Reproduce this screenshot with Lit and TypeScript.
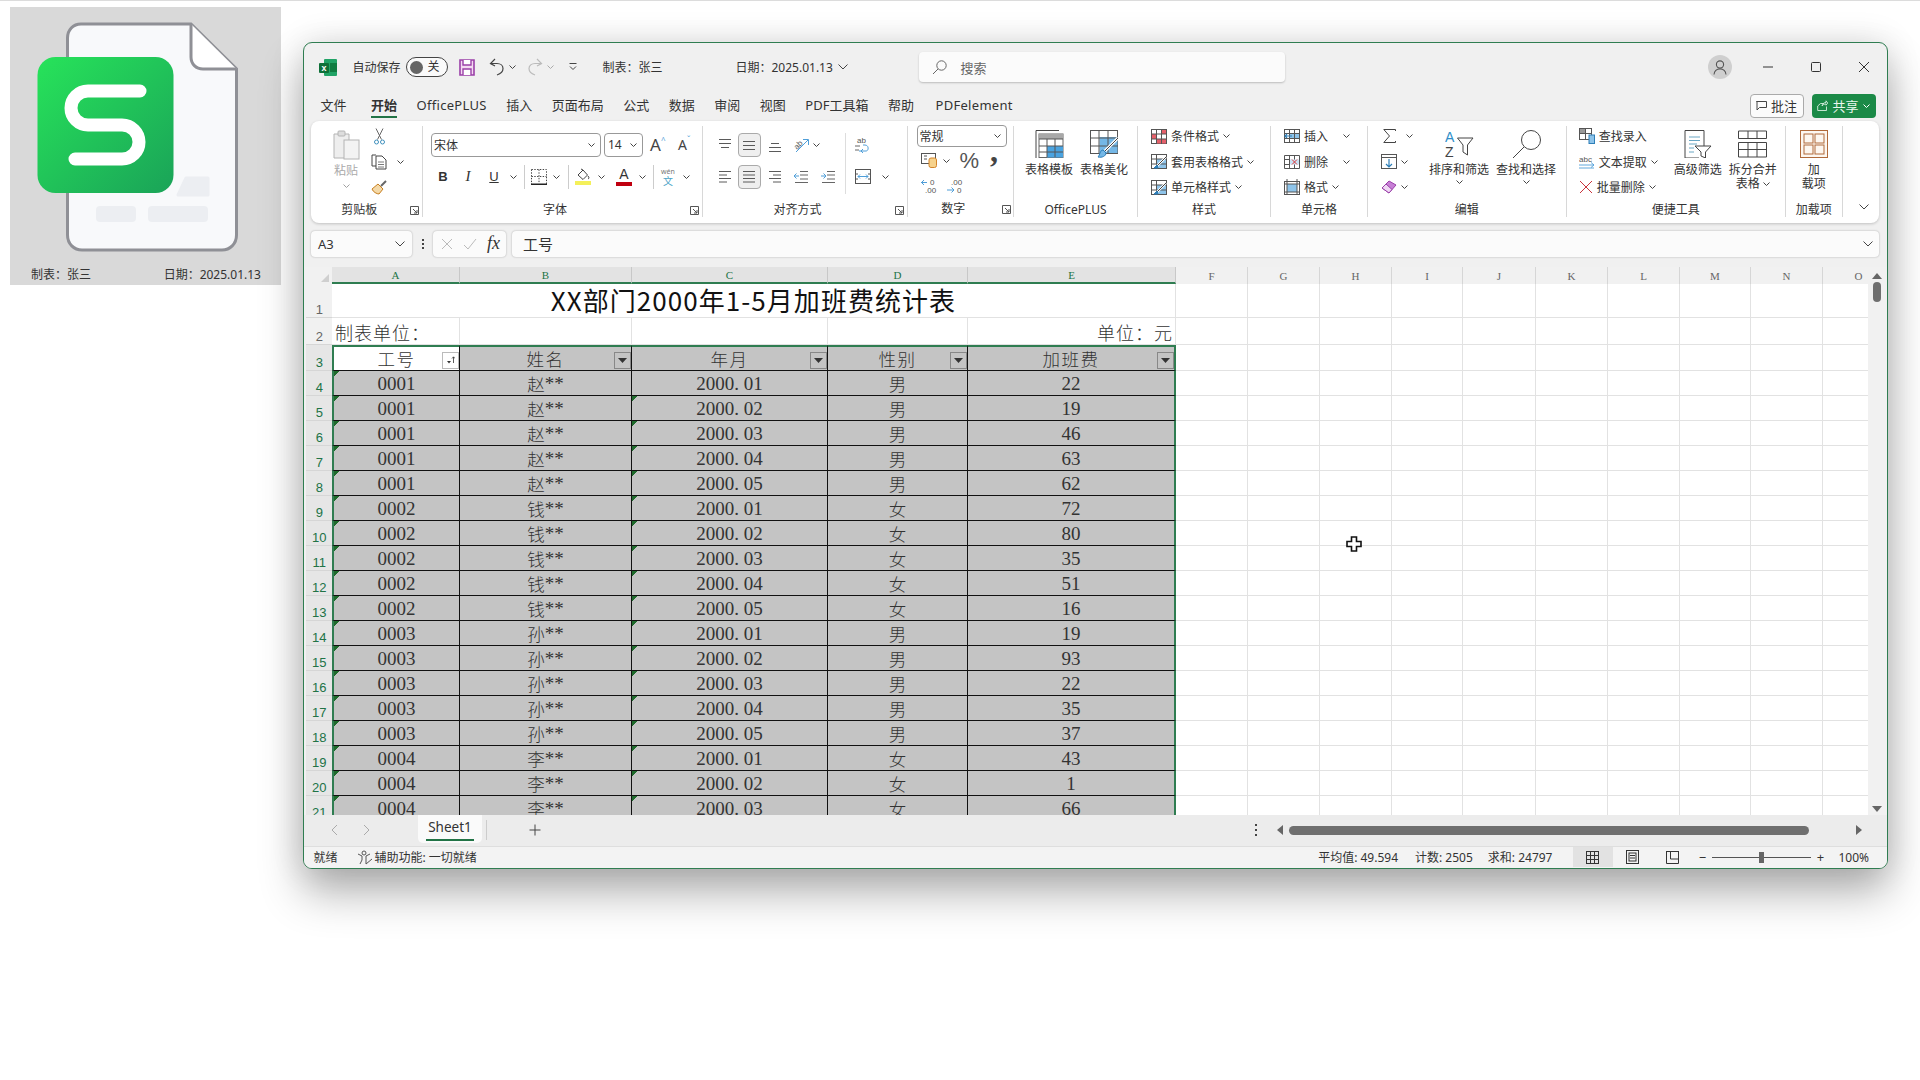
import { LitElement, html, svg, css, nothing } from "lit";
import { customElement } from "lit/decorators.js";

const G = "#5a5a5a";
const BL = "#4f9ed8";
const ic = (w: number, h: number, body: unknown) =>
  html`<svg class="ic" width=${w} height=${h} viewBox="0 0 ${w} ${h}" fill="none" stroke="${G}" stroke-width="1">${body}</svg>`;

const chev = () => html`<svg class="ch" width="7" height="4" viewBox="0 0 7 4" fill="none" stroke="#444" stroke-width="1"><path d="M.5 .5 3.5 3.5 6.5 .5"/></svg>`;
const chevL = () => html`<svg class="ch" width="10" height="6" viewBox="0 0 10 6" fill="none" stroke="#444" stroke-width="1"><path d="M.5 .5 5 5 9.5 .5"/></svg>`;
const launcher = () => html`<span class="lau"><svg width="9" height="9" viewBox="0 0 9 9" fill="none" stroke="#555"><path d="M.5 8.5V.5H8.5V8.5H.5M3 3 7 7M7 4V7H4"/></svg></span>`;

const lines = (rows: number[][]) => ic(14, 14, svg`${rows.map((r) => svg`<path d="M${r[1]} ${r[0]}H${r[2]}"/>`)}`);

const icons = {
  logo: html`<svg class="ic" width="18" height="17" viewBox="0 0 18 17"><rect x="5" width="13" height="17" rx="1" fill="#21a366"/><rect x="11" y="4" width="7" height="9" fill="#107c41"/><rect y="4" width="10" height="10" rx="1" fill="#0f7038"/><text x="5" y="12" font-size="9" font-weight="700" fill="#fff" text-anchor="middle" font-family="Liberation Sans">x</text></svg>`,
  save: ic(16, 17, svg`<path d="M1 1H15V16H1Z" fill="#f4d9f1" stroke="#9a3fa8" stroke-width="1.6"/><path d="M4 1V6H12V1M4 16V10H12V16" stroke="#9a3fa8" stroke-width="1.4" fill="#fff"/>`),
  undo: ic(15, 18, svg`<path d="M6 1 1.5 5.5 6 8M2 5.5H8C11.5 5.5 14 7.5 14 10.5C14 13.5 11 16 8 17" stroke="#444" stroke-width="1.2"/>`),
  redo: ic(15, 18, svg`<path d="M9 1 13.5 5.5 9 8M13 5.5H7C3.5 5.5 1 7.5 1 10.5C1 13.5 4 16 7 17" stroke="#bbb" stroke-width="1.2"/>`),
  custom: ic(8, 8, svg`<path d="M.5 .5H7.5M1 3.5 4 6.5 7 3.5" stroke="#444"/>`),
  search: ic(15, 15, svg`<circle cx="9.5" cy="5.5" r="4.7" stroke="#666"/><path d="M6 9 1 14" stroke="#666"/>`),
  avatar: html`<span class="avatar"><svg width="14" height="15" viewBox="0 0 14 15" fill="none" stroke="#555" stroke-width="1.1"><circle cx="7" cy="4.5" r="3.6"/><path d="M1 14.5C1.5 10.5 4 9 7 9S12.5 10.5 13 14.5"/></svg></span>`,
  min: ic(10, 10, svg`<path d="M0 5H10" stroke="#333"/>`),
  max: ic(10, 10, svg`<rect x=".5" y=".5" width="9" height="9" rx="1" stroke="#333"/>`),
  close: ic(10, 10, svg`<path d="M0 0 10 10M10 0 0 10" stroke="#333"/>`),
  comment: ic(11, 10, svg`<path d="M.5 .5H10.5V6.5H3.5L1 9V.5Z" stroke="#444"/>`),
  share: ic(11, 11, svg`<path d="M7 3.5H3.5L.7 6 .7 10.5H9.5V6.5M5 6C5.5 3.5 7 2.5 9 2.5V.8L10.7 3 9 5.2V4C7.5 4 6 4.5 5 6Z" stroke="#d8efe0" stroke-width=".9"/>`),
  paste: ic(27, 30, svg`<path d="M4 4H16V28H1V4Z" fill="#eee" stroke="#b4b4b4"/><rect x="5" y="1" width="7" height="5" rx="1" fill="#ddd" stroke="#b4b4b4"/><rect x="11" y="10" width="15" height="19" fill="#f3f3f3" stroke="#b4b4b4"/>`),
  cut: ic(11, 17, svg`<path d="M2 .5 7.5 11.5M9 .5 3.5 11.5" stroke="#666"/><circle cx="2.5" cy="14" r="2" stroke="#3f8fbd"/><circle cx="8.5" cy="14" r="2" stroke="#3f8fbd"/>`),
  copy: ic(17, 16, svg`<path d="M5 1H1V12H5" stroke="#444"/><path d="M5 2H11L15 6V15H5Z" fill="#fff" stroke="#444"/><path d="M7 8H13M7 10.5H13M7 13H13" stroke="#7a7a7a"/>`),
  brush: ic(17, 16, svg`<path d="M1 10 7 5 12 10 8 15C6 15 2 13 1 10Z" fill="#f4d9a8" stroke="#c67f21"/><path d="M10 7 15 2" stroke="#666" stroke-width="2"/>`),
  border: ic(16, 16, svg`<path d="M.5 .5H15.5V15M.5 .5V15M8 .5V14M.5 7.5H15.5" stroke="#444" stroke-dasharray="1.4 1.4"/><path d="M0 15.2H16" stroke="#222" stroke-width="1.4"/>`),
  fill: ic(16, 17, svg`<path d="M3 7 8 2 12.5 7 8 11.5Z" stroke="#444"/><path d="M6 1 8 2" stroke="#444"/><path d="M13 8c1 1.5 1.5 2.2 0 3" stroke="#444"/><rect y="13" width="16" height="4" fill="#f4f05a" stroke="none"/>`),
  top: lines([[1.5, 1, 13], [5.5, 1, 13], [9.5, 3, 11]]),
  mid: lines([[3.5, 1, 13], [7.5, 1, 13], [11.5, 1, 13]]),
  bot: lines([[5.5, 3, 11], [9.5, 1, 13], [13.5, 1, 13]]),
  left: lines([[1.5, 1, 13], [5, 1, 9], [8.5, 1, 13], [12, 1, 9]]),
  center: lines([[1.5, 1, 13], [5, 1, 13], [8.5, 1, 13], [12, 1, 13]]),
  right: lines([[1.5, 1, 13], [5, 5, 13], [8.5, 1, 13], [12, 5, 13]]),
  orient: ic(16, 16, svg`<text x="1" y="10" font-size="8" fill="#555" stroke="none" transform="rotate(-45 6 8)" font-family="Liberation Sans">ab</text><path d="M3 15 15 3M10 2.5H15.5V8" stroke="${BL}"/>`),
  indL: ic(14, 12, svg`<path d="M6 .5H14M6 4H14M6 8H14M1 11.5H14" stroke="#666"/><path d="M0 5H5M2.5 2.5 0 5 2.5 7.5" stroke="${BL}"/>`),
  indR: ic(14, 12, svg`<path d="M6 .5H14M6 4H14M6 8H14M1 11.5H14" stroke="#666"/><path d="M0 5H5M2.5 2.5 5 5 2.5 7.5" stroke="${BL}"/>`),
  wrap: ic(14, 18, svg`<text x="2" y="7" font-size="8" fill="#555" stroke="none" font-family="Liberation Sans">ab</text><path d="M0 10H5M0 14H4" stroke="#666"/><path d="M4 15H11C14 15 14 9 10 9H8M6 15 8 13M6 15 8 17" stroke="${BL}"/>`),
  merge: ic(16, 15, svg`<rect x=".5" y=".5" width="15" height="14" stroke="#555"/><path d="M0 5H3M0 10H3M13 5H16M13 10H16" stroke="#555"/><path d="M3 7.5H13M5 5.5 3 7.5 5 9.5M11 5.5 13 7.5 11 9.5" stroke="${BL}"/>`),
  acct: ic(16, 15, svg`<rect x=".5" y=".5" width="14" height="10" stroke="#555"/><path d="M3 3H6M3 6H6" stroke="#555"/><rect x="8" y="5" width="7.5" height="9.5" rx="2" fill="#f6d28c" stroke="#d3842a"/>`),
  inc: html`<svg class="ic" width="16" height="16" viewBox="0 0 16 16" fill="none"><path d="M0 4.5H6M3 2 .5 4.5 3 7" stroke="${BL}"/><text x="9" y="7" font-size="8" fill="#555" font-family="Liberation Sans">0</text><text x="4" y="15" font-size="8" fill="#555" font-family="Liberation Sans">.00</text></svg>`,
  dec: html`<svg class="ic" width="16" height="16" viewBox="0 0 16 16" fill="none"><text x="4" y="7" font-size="8" fill="#555" font-family="Liberation Sans">.00</text><path d="M0 12H7M4.5 9.5 7 12 4.5 14.5" stroke="${BL}"/><text x="10" y="15" font-size="8" fill="#555" font-family="Liberation Sans">0</text></svg>`,
  tmpl: ic(29, 28, svg`<path d="M1 28V.5H24" stroke="#444"/><rect x="4" y="4" width="24" height="23.5" fill="#fff" stroke="#666"/><rect x="4" y="4" width="24" height="5" fill="#a8a8a8" stroke="none"/><rect x="12" y="16" width="16" height="11.5" fill="#4aa3e0" stroke="none"/><path d="M4 9H28M4 16H28M4 22H28M12 9V27M20 9V27" stroke="#555"/>`),
  beaut: ic(29, 28, svg`<rect x=".5" y=".5" width="27" height="23" fill="#fff" stroke="#555"/><rect x="9.5" y="7" width="18" height="16" fill="#74b7e6" stroke="none"/><path d="M0 8H28M0 16H28M9 0V24M18 0V24" stroke="#555"/><path d="M28 8 15 21" stroke="#fff" stroke-width="3"/><path d="M28 8 15 21" stroke="#444"/><path d="M13 20C10 20 10 25 8 27C12 28 16 26 16 23Z" fill="#74b7e6" stroke="#2e7fb8"/>`),
  cond: ic(16, 15, svg`<rect x=".5" y=".5" width="15" height="14" fill="#fff" stroke="#555"/><rect x="1" y="5" width="5" height="5" fill="#e5606a" stroke="none"/><rect x="10" y="1" width="5" height="4" fill="#e5606a" stroke="none"/><rect x="6" y="10" width="9" height="4.5" fill="#e5606a" stroke="none"/><path d="M0 5H16M0 10H16M5.5 0V15M10.5 0V15" stroke="#555"/>`),
  tstyle: ic(16, 15, svg`<rect x=".5" y=".5" width="15" height="14" fill="#fff" stroke="#555"/><rect x="6" y="5" width="9" height="9" fill="#8ec4ea" stroke="none"/><path d="M0 5H16M0 10H16M5.5 0V15" stroke="#555"/><path d="M15 3 6 12" stroke="#fff" stroke-width="2.4"/><path d="M15 3 6 12" stroke="#444"/><path d="M6 11 3 14 7 14Z" fill="#2e7fb8" stroke="#2e7fb8"/>`),
  ins: ic(16, 14, svg`<rect x=".5" y=".5" width="15" height="13" fill="#fff" stroke="#555"/><rect x="5" y="4.5" width="10" height="5" fill="#8ec4ea" stroke="none"/><path d="M0 4.5H16M0 9.5H16M5.5 0V14M10.5 0V14" stroke="#555"/><path d="M1 7H8M3 5 1 7 3 9" stroke="#2e7fb8" stroke-width="1.2"/>`),
  del: ic(16, 14, svg`<path d="M.5 .5H15.5M.5 13.5H15.5M.5 .5V13.5M15.5 .5V13.5" stroke="#555"/><path d="M0 4.5H5.5V9.5H0M5.5 0V14M10.5 0V14" stroke="#555"/><rect x="6" y="4.5" width="9" height="5" fill="#c9e2f4" stroke="none"/><path d="M8 4.5 13 9.5M13 4.5 8 9.5" stroke="#d33"/>`),
  fmt: ic(16, 16, svg`<rect x=".5" y="2.5" width="15" height="13" fill="#fff" stroke="#555"/><rect x="3" y="5" width="10" height="8" fill="#8ec4ea" stroke="none"/><path d="M3 0V16M13 0V16M0 5H16M0 13H16" stroke="#555"/>`),
  sum: ic(13, 14, svg`<path d="M12.5 2V.5H.8L6.5 7 .8 13.5H12.5V12" stroke="#444"/>`),
  fillDown: ic(16, 15, svg`<rect x=".5" y=".5" width="15" height="14" stroke="#555"/><path d="M0 3.5H16" stroke="#555"/><path d="M8 5V13M5 10 8 13 11 10" stroke="#2e7fb8" stroke-width="1.2"/>`),
  eraser: ic(16, 14, svg`<path d="M1 8 8 1 15 5 8 13Z" fill="#c77fd6" stroke="#9a3fa8"/><path d="M1 8 8 13 11 9.5 5 4Z" fill="#efd7f4" stroke="#9a3fa8"/>`),
  sort: html`<svg class="ic" width="29" height="28" viewBox="0 0 29 28" fill="none"><text x="0" y="12" font-size="14" fill="#2e8ec9" font-family="Liberation Sans">A</text><text x="0" y="27" font-size="14" fill="#444" font-family="Liberation Sans">Z</text><path d="M12.5 8H28L22.5 15V25L18 22V15Z" stroke="#444"/></svg>`,
  find: ic(29, 28, svg`<circle cx="19" cy="10" r="9.5" stroke="#444"/><path d="M12 17 1 28" stroke="#444"/>`),
  lookup: ic(16, 16, svg`<rect x=".5" y=".5" width="12" height="11" fill="#fff" stroke="#555"/><rect x="1" y="1" width="5" height="4" fill="#999" stroke="none"/><path d="M0 5.5H13M6.5 0V12" stroke="#555"/><rect x="10" y="7" width="5.5" height="8.5" fill="#8ec4ea" stroke="#2e7fb8"/>`),
  abc: html`<svg class="ic" width="16" height="16" viewBox="0 0 16 16" fill="none"><text x="0" y="8" font-size="8" fill="#555" font-family="Liberation Sans">abc</text><path d="M0 11H15M0 14H15M12 8.5 15 11 12 13.5" stroke="${BL}" stroke-width=".9"/></svg>`,
  redX: ic(14, 14, svg`<path d="M1 1 13 13M13 1 1 13" stroke="#c9333c"/>`),
  adv: ic(28, 28, svg`<path d="M20 19V.5H1V28H15" stroke="#444"/><path d="M5 7H16M5 10.5H16M5 14H13M5 18H10M5 22H10" stroke="#6aa7c4"/><path d="M11 16H27L21.5 22V28L17 26V22Z" fill="#fff" stroke="#444"/>`),
  split: ic(29, 27, svg`<path d="M.5 .5H28.5V8H.5ZM10 .5V8M19 .5V8" stroke="#444"/><path d="M.5 12H28.5V26.5H.5ZM.5 19H28.5M10 12V26.5M19 12V26.5" stroke="#444"/>`),
  addin: ic(28, 28, svg`<rect x=".5" y=".5" width="27" height="27" fill="#fdf7f0" stroke="#b06a3a"/><rect x="4" y="4" width="9" height="9" stroke="#b06a3a"/><rect x="15" y="4" width="9" height="9" stroke="#b06a3a"/><rect x="4" y="15" width="9" height="9" stroke="#b06a3a"/><rect x="15" y="15" width="9" height="9" stroke="#b06a3a"/>`),
  cross: ic(12, 12, svg`<path d="M1 1 11 11M11 1 1 11" stroke="#bbb"/>`),
  check: ic(14, 12, svg`<path d="M1 7 5 11 13 1" stroke="#bbb"/>`),
  left1: ic(7, 12, svg`<path d="M6 1 1 6 6 11" stroke="#aaa"/>`),
  right1: ic(7, 12, svg`<path d="M1 1 6 6 1 11" stroke="#aaa"/>`),
  plus: ic(12, 12, svg`<path d="M6 .5V11.5M.5 6H11.5" stroke="#444"/>`),
  a11y: ic(16, 15, svg`<circle cx="7" cy="3" r="2" stroke="#555"/><path d="M1 4 5 6V10L3 14M13 4 9 6V10L9 14 15 9" stroke="#555"/>`),
  vNorm: ic(13, 13, svg`<rect x=".5" y=".5" width="12" height="12" stroke="#333"/><path d="M0 4.5H13M0 8.5H13M4.5 0V13M8.5 0V13" stroke="#333"/>`),
  vPage: ic(13, 14, svg`<rect x=".5" y=".5" width="12" height="13" stroke="#333"/><rect x="3" y="3" width="7" height="8" stroke="#333"/><path d="M4 5.5H9M4 8H9" stroke="#333"/>`),
  vBreak: ic(13, 13, svg`<path d="M.5 0V12.5H12.5V0M.5 .5H12.5M4.5 0V8H12.5" stroke="#333"/>`),
  upTri: ic(10, 6, svg`<path d="M5 0 10 6H0Z" fill="#666" stroke="none"/>`),
  dnTri: ic(10, 6, svg`<path d="M0 0H10L5 6Z" fill="#666" stroke="none"/>`),
  ltTri: ic(6, 10, svg`<path d="M6 0V10L0 5Z" fill="#666" stroke="none"/>`),
  rtTri: ic(6, 10, svg`<path d="M0 0V10L6 5Z" fill="#666" stroke="none"/>`),
  corner: ic(8, 8, svg`<path d="M8 0V8H0Z" fill="#cfcfcf" stroke="none"/>`),
  filter: ic(9, 8, svg`<path d="M1 5H5L3 7.5Z" fill="#333" stroke="none"/><path d="M7.5 7V1M6 2.5 7.5 .8 9 2.5" stroke="#333" stroke-width=".8"/>`),
  filter2: ic(9, 5, svg`<path d="M0 0H9L4.5 5Z" fill="#333" stroke="none"/>`),
  cursor: html`<svg class="ic" width="16" height="16" viewBox="0 0 16 16"><path d="M5.5 1H10.5V5.5H15V10.5H10.5V15H5.5V10.5H1V5.5H5.5Z" fill="#fff" stroke="#111" stroke-width="1.6"/></svg>`,
};

const rowsData: string[][] = [
  ["0001", "赵", "01", "男", "22"], ["0001", "赵", "02", "男", "19"], ["0001", "赵", "03", "男", "46"],
  ["0001", "赵", "04", "男", "63"], ["0001", "赵", "05", "男", "62"], ["0002", "钱", "01", "女", "72"],
  ["0002", "钱", "02", "女", "80"], ["0002", "钱", "03", "女", "35"], ["0002", "钱", "04", "女", "51"],
  ["0002", "钱", "05", "女", "16"], ["0003", "孙", "01", "男", "19"], ["0003", "孙", "02", "男", "93"],
  ["0003", "孙", "03", "男", "22"], ["0003", "孙", "04", "男", "35"], ["0003", "孙", "05", "男", "37"],
  ["0004", "李", "01", "女", "43"], ["0004", "李", "02", "女", "1"], ["0004", "李", "03", "女", "66"],
];
const tabs = ["文件", "开始", "OfficePLUS", "插入", "页面布局", "公式", "数据", "审阅", "视图", "PDF工具箱", "帮助", "PDFelement"];
const colsA = ["A", "B", "C", "D", "E"];
const colsB = ["F", "G", "H", "I", "J", "K", "L", "M", "N", "O"];

@customElement("app-root")
export class AppRoot extends LitElement {
  static styles = css`
    :host { display: block; width: 1920px; height: 1080px; background: #fff; position: relative; overflow: hidden;
      font-family: "Noto Sans", "Noto Sans CJK SC", sans-serif; color: #333; font-size: 12px; }
    * { box-sizing: border-box; }
    .ic { display: block; flex: none; }
    .ch { display: block; flex: none; }
    .topline { height: 1px; background: #dcdcdc; }
    .page { display: flex; align-items: flex-start; }
    .thumb { width: 271px; height: 278px; margin: 6px 0 0 10px; background: #d9d9d9; display: flex; flex-direction: column; flex: none; }
    .thumb svg { display: block; margin-top: 0; }
    .thumb-cap { display: flex; justify-content: space-between; padding: 0 20px 0 21px; font-size: 12px; color: #333; line-height: 16px; margin-top: 12px; }
    .win { width: 1585px; height: 827px; margin: 41px 0 0 21.5px; flex: none; border: 1px solid #2f7d51; border-radius: 9px;
      background: #f0f0f0; box-shadow: 0 24px 44px rgba(0,0,0,.30), 0 0 34px rgba(0,0,0,.12); display: flex; flex-direction: column; overflow: hidden; }
    .title { height: 48px; flex: none; display: flex; align-items: center; padding: 0 17.5px 0 15px; }
    .autos { margin-left: 16px; width: 46px; white-space: nowrap; }
    .toggle { margin-left: 7px; width: 42px; height: 20px; border: 1px solid #444; border-radius: 10px; display: flex; align-items: center; padding: 0 3px; gap: 5px; background: #fafafa; }
    .toggle i { width: 13px; height: 13px; background: #666; border-radius: 50%; display: block; flex: none; }
    .toggle span { font-size: 12px; line-height: 1; }
    .save { margin-left: 11.5px; } .undo { margin-left: 13.5px; } .m5 { margin-left: 5px; } .redo { margin-left: 12px; }
    .m4 { margin-left: 4px; } .cust { margin-left: 15px; }
    .dim { opacity: .4; display: block; }
    .f1 { margin-left: 26px; width: 60px; white-space: nowrap; } .f2 { margin-left: 73px; width: 96px; white-space: nowrap; } .m6 { margin-left: 6px; }
    .search { margin-left: 71px; width: 366px; height: 30px; background: #fbfbfb; border-radius: 4px; box-shadow: 0 1px 2px rgba(0,0,0,.22); display: flex; align-items: center; padding-left: 13px; gap: 14px; font-size: 13px; color: #666; }
    .avatar { margin-left: auto; width: 24px; height: 24px; border-radius: 50%; background: #cfcfcf; display: flex; align-items: center; justify-content: center; }
    .min { margin-left: 31px; } .wb { margin-left: 38px; }
    .tabs { height: 29.5px; flex: none; display: flex; align-items: center; gap: 19.5px; padding: 0 11px 0 17px; font-size: 13px; color: #333; }
    .tab { height: 24px; line-height: 23px; border-bottom: 2px solid transparent; white-space: nowrap; }
    .tab.on { font-weight: 700; border-bottom-color: #217346; }
    .tab.lat { letter-spacing: .3px; }
    .tab:first-child { margin-right: 5px; }
    .tab:nth-child(12) { margin-left: 2px; }
    .tbtns { margin-left: auto; display: flex; gap: 8px; }
    .tb { height: 24px; border-radius: 4px; display: flex; align-items: center; justify-content: center; gap: 4px; font-size: 13px; white-space: nowrap; }
    .tb.c { width: 54px; border: 1px solid #aaa; background: #fbfbfb; }
    .tb.s { width: 64px; background: #1b8a47; color: #eaf6ee; }
    .tb.s .ch { filter: invert(1) brightness(2); }
    .ribbon { margin: 0 7.5px; height: 102px; flex: none; background: #fff; border-radius: 8px; box-shadow: 0 1px 3px rgba(0,0,0,.2); display: flex; }
    .g { height: 91px; margin-top: 5px; border-right: 1px solid #d8d8d8; display: flex; flex-direction: column; flex: none; }
    .gb { height: 75px; display: flex; flex: none; }
    .gl { flex: 1; display: flex; align-items: center; min-height: 0; padding-top: 3px; }
    .gl b { flex: 1; text-align: center; font-weight: 400; font-size: 12px; line-height: 14px; }
    .lau { width: 14px; display: flex; justify-content: center; }
    .g1 { width: 111.5px; } .g2 { width: 280px; } .g3 { width: 205px; } .g4 { width: 106.5px; } .g5 { width: 124px; }
    .g6 { width: 133px; } .g7 { width: 97px; } .g8 { width: 198.7px; } .g9 { width: 219px; } .g10 { width: 57px; }
    .g11 { flex: 1; border: 0; align-items: flex-end; justify-content: flex-end; padding: 0 10px 7px 0; }
    .three { display: grid; grid-auto-rows: 25.5px; margin-top: -2px; align-items: center; white-space: nowrap; }
    .r { display: flex; align-items: center; gap: 4px; height: 25.5px; }
    .paste { width: 28px; margin: 4px 11px 0 21px; display: flex; flex-direction: column; align-items: center; color: #aaa; line-height: 14px; }
    .paste span { margin-top: 4px; white-space: nowrap; }
    .paste .ch { margin-top: 6px; opacity: .5; }
    .clipcol .r { gap: 9px; }
    .slot { width: 17px; display: flex; justify-content: center; }
    .fontb { padding: 7px 0 0 8.5px; flex-direction: column; gap: 8px; }
    .frow { display: flex; height: 24px; align-items: center; }
    .sel { height: 24px; border: 1px solid #999; border-radius: 4px; display: flex; align-items: center; justify-content: space-between; padding: 0 5px 0 2px; background: #fff; font-size: 12px; }
    .sel.font { width: 170px; margin-right: 3px; } .sel.size { width: 39px; padding-left: 3px; }
    .big-a { margin-left: 7px; width: 28px; display: flex; align-items: flex-start; font-size: 17px; line-height: 18px; color: #444; }
    .sm-a { font-size: 14px; line-height: 18px; display: flex; width: 20px; color: #444; }
    .car { font-size: 8px; line-height: 8px; color: #4f9ed8; }
    .fgrid { display: grid; grid-template-columns: 24px 26px 26px 12px 10px 20px 14px 11px 18px 18px 28px 8px 15px 14px 22px; justify-items: center; align-items: center; height: 24px; }
    .vs { width: 1px; height: 24px; background: #ccc; }
    .bt { font-size: 14px; line-height: 1; color: #333; }
    .bt.b { font-weight: 700; font-size: 13px; font-family: "Liberation Sans"; }
    .bt.i { font-style: italic; font-family: "Liberation Serif"; font-size: 15px; }
    .bt.u { text-decoration: underline; font-family: "Liberation Sans"; font-size: 13px; }
    .fc { display: flex; flex-direction: column; align-items: center; width: 16px; font-size: 14px; line-height: 13px; font-family: "Liberation Sans"; }
    .fc i { display: block; width: 16px; height: 4px; background: #c00010; margin-top: 1px; }
    .wen { display: flex; flex-direction: column; align-items: center; line-height: 9px; }
    .wen i { font-style: normal; font-size: 7px; color: #777; } .wen u { text-decoration: none; font-size: 10px; color: #4ba3c7; line-height: 11px; }
    .alb { padding-top: 7px; }
    .agrid { width: 142.5px; padding-left: 9.5px; display: grid; grid-template-columns: 25px 24px 28px 24px 29px; grid-template-rows: 24px 24px; row-gap: 8px; justify-items: center; align-items: center; }
    .agrid .ch { justify-self: start; }
    .abtn { width: 23px; height: 24px; background: #efefef; border: 1px solid #aaa; border-radius: 4px; display: flex; align-items: center; justify-content: center; }
    .asep { width: 1px; height: 61px; background: #ddd; margin-top: 0; }
    .awr { padding-left: 9px; display: grid; grid-template-rows: 24px 24px; row-gap: 8px; grid-template-columns: 22px 22px; align-items: center; justify-items: start; }
    .awr .ch { margin-left: 5px; }
    .numb { flex-direction: column; padding-left: 9px; margin-top: -2px; }
    .numsel { width: 90px; height: 23px; margin-top: 1px; }
    .nrow { height: 25.5px; display: flex; align-items: center; padding-left: 4px; }
    .nrow.a { margin-top: 1px; }
    .n1 { margin-left: 6px; } .n2 { margin-left: 10px; font-size: 22px; line-height: 20px; color: #555; font-family: "Liberation Sans"; } .n3 { margin-left: 11px; font-size: 32px; line-height: 20px; font-weight: 700; font-family: "Liberation Serif"; color: #444; height: 20px; transform: translateY(-10px); }
    .n4 { margin-left: 10px; }
    .big { display: flex; flex-direction: column; align-items: center; padding-top: 4px; line-height: 14px; white-space: nowrap; }
    .big > svg.ic { margin-bottom: 5px; height: 28px; }
    .big .ch { margin-top: 3px; }
    .w2 { width: 55px; } .w3 { width: 64px; } .w4 { width: 52px; } .w5 { width: 100%; }
    .ln { display: flex; align-items: center; gap: 3px; }
    .ln .ch { margin-top: 0; }
    .pl5 { padding-left: 7.5px; } .pl13 { padding-left: 13px; } .pl12 { padding-left: 12px; } .gap3 { gap: 3px; }
    .ch16 { margin-left: 11px; }
    .ed { width: 43px; flex: none; } .edf { margin-left: 4px; }
    .td { width: 90px; flex: none; }
    .fbar { margin: 8px 8px 0 7.5px; height: 26px; flex: none; display: flex; align-items: stretch; }
    .nb { width: 101px; background: #fbfbfb; border-radius: 4px; box-shadow: 0 0 2px rgba(0,0,0,.3); display: flex; align-items: center; justify-content: space-between; padding: 0 7px; font-size: 13px; }
    .dots { width: 21px; display: flex; flex-direction: column; align-items: center; justify-content: center; gap: 2px; }
    .dots i { width: 2px; height: 2px; background: #444; display: block; }
    .fxb { width: 73px; background: #fbfbfb; border-radius: 4px; box-shadow: 0 0 2px rgba(0,0,0,.3); display: flex; align-items: center; gap: 10px; padding: 0 0 0 8px; margin-right: 6px; }
    .fx { font-family: "Liberation Serif"; font-style: italic; font-size: 18px; color: #333; }
    .fi { flex: 1; background: #fbfbfb; border-radius: 4px; box-shadow: 0 0 2px rgba(0,0,0,.3); display: flex; align-items: center; justify-content: space-between; padding: 0 6px 0 11px; font-size: 15px; }
    .sheet { margin-top: 10px; height: 548px; flex: none; display: flex; background: #f1f1f1; }
    .grid { width: 1564.5px; flex: none; overflow: hidden; font-family: "Liberation Serif", "Noto Sans CJK SC", serif; }
    .hr, .rw { display: grid; grid-template-columns: 26.5px 128px 172px 196px 140px 208px 72px 72px 72px 71px 73px 72px 72px 71px 72px 72px; grid-template-rows: minmax(0, 1fr); margin-left: 2px; }
    .hr { height: 17px; }
    .hc { display: flex; align-items: center; justify-content: center; font-size: 11px; color: #666; background: #f1f1f1; border-right: 1px solid #d6d6d6; line-height: 15px; padding-top: 2px; }
    .hc.sel2 { background: #e3e3e3; color: #217346; border-right-color: #c8c8c8; border-bottom: 2px solid #2f7d51; }
    .hc.corner { justify-content: flex-end; align-items: flex-end; border: 0; padding: 0 3px 2px 0; }
    .rn { display: flex; align-items: flex-end; justify-content: center; font-size: 13px; line-height: 14px; color: #666; background: #f1f1f1; border-bottom: 1px solid #d6d6d6; padding: 0 0 0 1px; font-family: "Liberation Sans"; }
    .rn.on { background: #e6e6e6; color: #217346; }
    .c { background: #fff; border-right: 1px solid #e2e2e2; border-bottom: 1px solid #e2e2e2; }
    .title-c { grid-column: 2 / 7; display: flex; align-items: center; justify-content: center; font-size: 26px; line-height: 32px; color: #111; font-family: "Noto Sans CJK SC", sans-serif; letter-spacing: 1.05px; }
    .lft, .rgt { display: flex; align-items: flex-end; font-size: 18px; line-height: 24px; color: #333; font-family: "Noto Sans CJK SC", serif; font-weight: 300; white-space: nowrap; letter-spacing: 1px; }
    .lft { padding-left: 3px; } .rgt { justify-content: flex-end; padding-right: 2px; }
    .d { background-color: #c4c4c4; border-right: 1px solid #111; border-bottom: 1px solid #111; display: flex; align-items: center; justify-content: center; font-size: 19px; line-height: 22px; color: #333; padding-top: 3px; white-space: nowrap; position: relative; overflow: hidden; }
    .d .cj { font-family: "Noto Sans CJK SC", serif; font-weight: 300; font-size: 17.5px; }
    .d.tri { background-image: linear-gradient(135deg, #1f6b2c 0 4px, transparent 4px); background-repeat: no-repeat; background-size: 7px 7px; background-position: 0 0; }
    .d.h { border-top: 2px solid #2f7d51; padding-top: 1px; font-family: "Noto Sans CJK SC", serif; font-weight: 300; font-size: 17.5px; letter-spacing: 1.5px; color: #333; }
    .d.w { background-color: #fff; }
    .d.ls { border-left: 2px solid #2f7d51; } .d.rs { border-right: 2px solid #2f7d51; }
    .fb { position: absolute; right: 0; bottom: 1px; width: 17px; height: 17px; border: 1px solid #888; display: flex; align-items: center; justify-content: center; }
    .fb.white { background: #fff; border-color: #bbb; }
    .vbar { flex: 1; display: flex; flex-direction: column; align-items: center; padding: 6px 0 3px; }
    .vthumb { width: 8px; height: 20px; background: #6f6f6f; border-radius: 4px; margin-top: 3px; }
    .vsp { flex: 1; }
    .stabs { height: 32px; flex: none; background: #ececec; display: flex; align-items: center; padding: 0 24.5px 0 27.5px; border-bottom: 1px solid #dedede; }
    .nx { margin-left: 25px; }
    .sh { margin-left: 48px; width: 64px; height: 28px; background: #fafafa; border-radius: 0 0 5px 5px; align-self: flex-start; display: flex; flex-direction: column; align-items: center; font-size: 13.5px; line-height: 22px; padding-top: 1px; }
    .sh i { display: block; width: 48px; height: 2px; background: #217346; margin-top: 1px; }
    .sh2 { margin-left: 4px; width: 1px; height: 20px; background: #ccc; }
    .pl { margin-left: 42px; }
    .dots2 { margin-left: auto; display: flex; flex-direction: column; gap: 3px; }
    .dots2 i { width: 2px; height: 2px; background: #444; display: block; }
    .hl { margin-left: 20px; } .hthumb { margin-left: 6px; width: 520px; height: 9px; background: #6f6f6f; border-radius: 5px; } .hr2 { margin-left: 47px; }
    .status { flex: 1; display: flex; align-items: center; padding: 0 14px 0 10px; font-size: 12px; color: #333; background: #f3f3f3; white-space: nowrap; }
    .a1 { margin-left: 19px; margin-right: 2px; }
    .st { margin-left: auto; } .st2 { margin-left: 17px; } .st3 { margin-left: 15px; }
    .vbtn { width: 40px; height: 20px; display: flex; align-items: center; justify-content: center; }
    .vbtn.on { background: #e2e2e2; margin-left: 20px; }
    .zm { margin-left: 6px; font-size: 13px; width: 8px; text-align: center; line-height: 1; }
    .slider { margin-left: 5px; width: 99px; height: 1px; background: #555; position: relative; }
    .slider i { position: absolute; left: 47px; top: -5px; width: 5px; height: 11px; background: #666; display: block; }
    .pct { margin-left: 14px; width: 34px; }
    .cur { position: absolute; left: 1346px; top: 536px; }
  `;

  big(icon: unknown, lines: unknown, cls: string) {
    return html`<div class="big ${cls}">${icon}${lines}</div>`;
  }

  renderThumb() {
    return html`<div class="thumb">
      <svg width="271" height="248" viewBox="0 0 271 248" fill="none">
        <path d="M71 17H181L226.5 62V228C226.5 237 220 243 212 243H72C64 243 57.5 237 57.5 228V31C57.5 23 63 17 71 17Z" fill="#f8f9fb" stroke="#8f9096" stroke-width="3"/>
        <path d="M181 17V50C181 57 186 62 193 62H226.5" fill="#fff" stroke="#8f9096" stroke-width="3"/>
        <path d="M176 171H198V188H168Z" fill="#eceef2" stroke="#eceef2" stroke-width="3" stroke-linejoin="round"/>
        <rect x="86" y="199" width="40" height="16" rx="4" fill="#eceef2"/>
        <rect x="138" y="199" width="60" height="16" rx="4" fill="#eceef2"/>
        <defs><linearGradient id="gg" x1="0" y1="0" x2="1" y2="1"><stop offset="0" stop-color="#27e35a"/><stop offset="1" stop-color="#1aa358"/></linearGradient></defs>
        <rect x="27.5" y="50" width="136" height="136" rx="18" fill="url(#gg)"/>
        <path d="M130 84H78A16.7 16.7 0 0 0 78 118H112A17 17 0 0 1 112 152H65" stroke="#fff" stroke-width="13" stroke-linecap="round"/>
      </svg>
      <div class="thumb-cap"><span>制表：张三</span><span>日期：2025.01.13</span></div>
    </div>`;
  }

  renderTitle() {
    return html`<div class="title">
      ${icons.logo}
      <span class="autos">自动保存</span>
      <div class="toggle"><i></i><span>关</span></div>
      <span class="save">${icons.save}</span>
      <span class="undo">${icons.undo}</span><span class="m5">${chev()}</span>
      <span class="redo">${icons.redo}</span><span class="m4 dim">${chev()}</span>
      <span class="cust">${icons.custom}</span>
      <span class="f1">制表：张三</span>
      <span class="f2">日期：2025.01.13</span><span class="m6">${chevL()}</span>
      <div class="search">${icons.search}<span>搜索</span></div>
      ${icons.avatar}
      <span class="min">${icons.min}</span><span class="wb">${icons.max}</span><span class="wb">${icons.close}</span>
    </div>`;
  }

  renderTabs() {
    return html`<div class="tabs">
      ${tabs.map((t) => html`<span class="tab ${t === "开始" ? "on" : ""} ${t === "OfficePLUS" || t === "PDFelement" ? "lat" : ""}">${t}</span>`)}
      <div class="tbtns">
        <div class="tb c">${icons.comment}批注</div>
        <div class="tb s">${icons.share}共享${chev()}</div>
      </div>
    </div>`;
  }

  renderRibbon() {
    const sr = (i: unknown, t: string, cls = "") => html`<div class="r">${i}<span>${t}</span>${cls === "none" ? nothing : html`<span class="${cls}">${chev()}</span>`}</div>`;
    return html`<div class="ribbon">
      <div class="g g1">
        <div class="gb">
          <div class="paste">${icons.paste}<span>粘贴</span>${chev()}</div>
          <div class="three clipcol">
            <div class="r"><span class="slot">${icons.cut}</span></div>
            <div class="r"><span class="slot">${icons.copy}</span>${chev()}</div>
            <div class="r"><span class="slot">${icons.brush}</span></div>
          </div>
        </div>
        <div class="gl"><b>剪贴板</b>${launcher()}</div>
      </div>
      <div class="g g2">
        <div class="gb fontb">
          <div class="frow">
            <div class="sel font"><span>宋体</span>${chev()}</div>
            <div class="sel size"><span>14</span>${chev()}</div>
            <div class="big-a">A<span class="car">^</span></div>
            <div class="sm-a">A<span class="car">ˇ</span></div>
          </div>
          <div class="fgrid">
            <span class="bt b">B</span><span class="bt i">I</span><span class="bt u">U</span>${chev()}<i class="vs"></i>
            ${icons.border}${chev()}<i class="vs"></i>
            ${icons.fill}${chev()}
            <span class="fc">A<i></i></span>${chev()}<i class="vs"></i>
            <span class="wen"><i>wén</i><u>文</u></span>${chev()}
          </div>
        </div>
        <div class="gl"><b>字体</b>${launcher()}</div>
      </div>
      <div class="g g3">
        <div class="gb alb">
          <div class="agrid">
            ${icons.top}<span class="abtn">${icons.mid}</span>${icons.bot}${icons.orient}${chev()}
            ${icons.left}<span class="abtn">${icons.center}</span>${icons.right}${icons.indL}${icons.indR}
          </div>
          <i class="asep"></i>
          <div class="awr">${icons.wrap}<span></span>${icons.merge}${chev()}</div>
        </div>
        <div class="gl"><b>对齐方式</b>${launcher()}</div>
      </div>
      <div class="g g4">
        <div class="gb numb">
          <div class="sel numsel"><span>常规</span>${chev()}</div>
          <div class="nrow a">${icons.acct}<span class="n1">${chev()}</span><span class="n2">%</span><span class="n3">,</span></div>
          <div class="nrow">${icons.inc}<span class="n4">${icons.dec}</span></div>
        </div>
        <div class="gl"><b>数字</b>${launcher()}</div>
      </div>
      <div class="g g5">
        <div class="gb pl5">
          ${this.big(icons.tmpl, html`<span>表格模板</span>`, "w2")}
          ${this.big(icons.beaut, html`<span>表格美化</span>`, "w2")}
        </div>
        <div class="gl"><b>OfficePLUS</b></div>
      </div>
      <div class="g g6">
        <div class="gb pl13"><div class="three">
          ${sr(icons.cond, "条件格式")}${sr(icons.tstyle, "套用表格格式")}${sr(icons.tstyle, "单元格样式")}
        </div></div>
        <div class="gl"><b>样式</b></div>
      </div>
      <div class="g g7">
        <div class="gb pl13"><div class="three">
          ${sr(icons.ins, "插入", "ch16")}${sr(icons.del, "删除", "ch16")}${sr(icons.fmt, "格式")}
        </div></div>
        <div class="gl"><b>单元格</b></div>
      </div>
      <div class="g g8">
        <div class="gb pl13 gap3">
          <div class="three ed">
            <div class="r"><span class="slot">${icons.sum}</span><span class="edf">${chev()}</span></div>
            <div class="r">${icons.fillDown}${chev()}</div>
            <div class="r">${icons.eraser}${chev()}</div>
          </div>
          ${this.big(icons.sort, html`<span>排序和筛选</span>${chev()}`, "w3")}
          ${this.big(icons.find, html`<span>查找和选择</span>${chev()}`, "w3")}
        </div>
        <div class="gl"><b>编辑</b></div>
      </div>
      <div class="g g9">
        <div class="gb pl12 gap3">
          <div class="three td">
            ${sr(icons.lookup, "查找录入", "none")}${sr(icons.abc, "文本提取")}${sr(icons.redX, "批量删除")}
          </div>
          ${this.big(icons.adv, html`<span>高级筛选</span>`, "w4")}
          ${this.big(icons.split, html`<span>拆分合并</span><span class="ln">表格${chev()}</span>`, "w4")}
        </div>
        <div class="gl"><b>便捷工具</b></div>
      </div>
      <div class="g g10">
        <div class="gb">
          ${this.big(icons.addin, html`<span>加</span><span>载项</span>`, "w5")}
        </div>
        <div class="gl"><b>加载项</b></div>
      </div>
      <div class="g g11">${chevL()}</div>
    </div>`;
  }

  renderFormula() {
    return html`<div class="fbar">
      <div class="nb"><span>A3</span>${chevL()}</div>
      <div class="dots"><i></i><i></i><i></i></div>
      <div class="fxb">${icons.cross}${icons.check}<span class="fx">fx</span></div>
      <div class="fi"><span>工号</span>${chevL()}</div>
    </div>`;
  }

  renderSheet() {
    const heads = ["工号", "姓名", "年月", "性别", "加班费"];
    const blanks = colsB.map(() => html`<div class="c"></div>`);
    const rh = (n: number) => `height:${n}px`;
    return html`<div class="sheet">
      <div class="grid">
        <div class="hr">
          <div class="hc corner">${icons.corner}</div>
          ${colsA.map((c) => html`<div class="hc sel2">${c}</div>`)}
          ${colsB.map((c) => html`<div class="hc">${c}</div>`)}
        </div>
        <div class="rw" style=${rh(34)}>
          <div class="rn">1</div>
          <div class="c title-c">XX部门2000年1-5月加班费统计表</div>
          ${blanks}
        </div>
        <div class="rw" style=${rh(27.5)}>
          <div class="rn">2</div>
          <div class="c lft">制表单位：</div><div class="c"></div><div class="c"></div><div class="c"></div>
          <div class="c rgt">单位：元</div>
          ${blanks}
        </div>
        <div class="rw" style=${rh(25.5)}>
          <div class="rn on">3</div>
          ${heads.map((h, i) => html`<div class="d h ${i === 0 ? "w ls" : ""} ${i === 4 ? "rs" : ""}">${h}<span class="fb ${i === 0 ? "white" : ""}">${i === 0 ? icons.filter : icons.filter2}</span></div>`)}
          ${blanks}
        </div>
        ${rowsData.map((r, i) => html`<div class="rw" style=${rh(25)}>
          <div class="rn on">${i + 4}</div>
          <div class="d tri ls">${r[0]}</div>
          <div class="d"><span class="cj">${r[1]}</span>**</div>
          <div class="d ${i > 0 ? "tri" : ""}">2000. ${r[2]}</div>
          <div class="d"><span class="cj">${r[3]}</span></div>
          <div class="d rs">${r[4]}</div>
          ${blanks}
        </div>`)}
      </div>
      <div class="vbar">${icons.upTri}<div class="vthumb"></div><div class="vsp"></div>${icons.dnTri}</div>
    </div>`;
  }

  renderBottom() {
    return html`<div class="stabs">
      ${icons.left1}<span class="nx">${icons.right1}</span>
      <div class="sh"><span>Sheet1</span><i></i></div><i class="sh2"></i>
      <span class="pl">${icons.plus}</span>
      <div class="dots2"><i></i><i></i><i></i></div>
      <span class="hl">${icons.ltTri}</span><div class="hthumb"></div><span class="hr2">${icons.rtTri}</span>
    </div>
    <div class="status">
      <span>就绪</span><span class="a1">${icons.a11y}</span><span>辅助功能: 一切就绪</span>
      <span class="st">平均值: 49.594</span><span class="st2">计数: 2505</span><span class="st3">求和: 24797</span>
      <span class="vbtn on">${icons.vNorm}</span><span class="vbtn">${icons.vPage}</span><span class="vbtn">${icons.vBreak}</span>
      <span class="zm">−</span><div class="slider"><i></i></div><span class="zm">+</span><span class="pct">100%</span>
    </div>`;
  }

  render() {
    return html`<div class="topline"></div>
      <div class="page">
        ${this.renderThumb()}
        <div class="win">
          ${this.renderTitle()}${this.renderTabs()}${this.renderRibbon()}${this.renderFormula()}${this.renderSheet()}${this.renderBottom()}
        </div>
      </div>
      <div class="cur">${icons.cursor}</div>`;
  }
}
